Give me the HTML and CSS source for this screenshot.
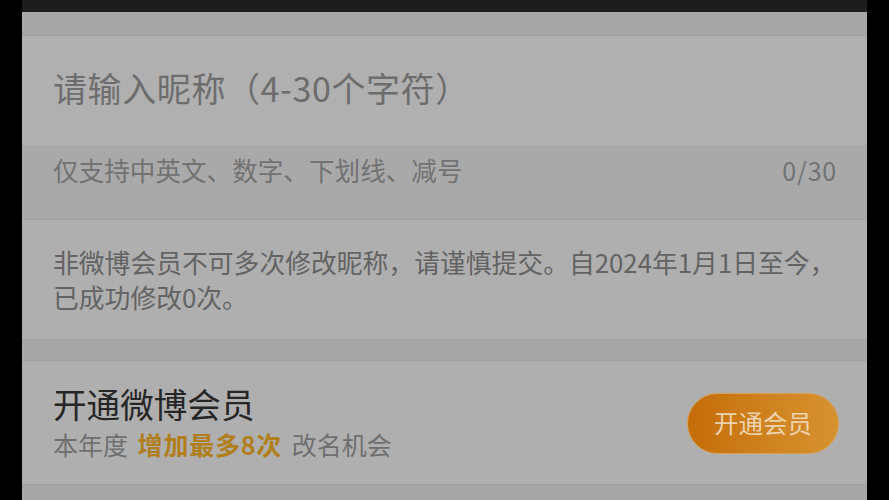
FILE: index.html
```html
<!DOCTYPE html>
<html lang="zh-CN">
<head>
<meta charset="utf-8">
<title>修改昵称</title>
<link rel="stylesheet" href="styles.css">
</head>
<body>
<div class="screen">
  <div class="topbar"></div>
  <div class="band band-top"></div>
  <div class="input-row">
    <span class="placeholder">请输入昵称（4-30个字符）</span>
  </div>
  <div class="hint-row">
    <span class="hint">仅支持中英文、数字、下划线、减号</span>
    <span class="count">0/30</span>
  </div>
  <div class="notice">
    <p>非微博会员不可多次修改昵称，请谨慎提交。自2024年1月1日至今，<br>已成功修改0次。</p>
  </div>
  <div class="band band-mid"></div>
  <div class="vip-card">
    <div class="vip-text">
      <div class="vip-title">开通微博会员</div>
      <div class="vip-sub">本年度 <b class="hl">增加最多8次</b> 改名机会</div>
    </div>
    <button class="vip-btn">开通会员</button>
  </div>
  <div class="band band-bottom"></div>
</div>
</body>
</html>
```

FILE: styles.css
```css
html, body {
  margin: 0;
  padding: 0;
  background: #000;
  height: 100%;
}
body {
  font-family: "Noto Sans CJK SC", "Noto Sans", sans-serif;
}
.screen {
  margin: 0 22px;
  height: 500px;
  background: #a6a6a6;
  display: flex;
  flex-direction: column;
  overflow: hidden;
}
.topbar {
  height: 12px;
  background: #1d1d1d;
  flex: none;
}
.band {
  background: #a7a7a7;
  flex: none;
}
.band-top {
  height: 23px;
  border-bottom: 1px solid #a1a1a1;
}
.input-row {
  height: 109px;
  background: #b0b0b0;
  display: flex;
  align-items: center;
  padding: 0 31px 6px;
  box-sizing: border-box;
  flex: none;
}
.placeholder {
  font-size: 34px;
  color: #6d6d6d;
  line-height: 40px;
  letter-spacing: 0.6px;
}
.hint-row {
  background: #a9a9a9;
  border-bottom: 1px solid #a2a2a2;
  display: flex;
  justify-content: space-between;
  align-items: flex-start;
  padding: 8px 30px 0 31px;
  box-sizing: border-box;
  height: 75px;
  flex: none;
}
.hint {
  font-size: 25.6px;
  line-height: 34px;
  color: #727272;
}
.count {
  font-size: 25px;
  line-height: 34px;
  color: #727272;
  letter-spacing: 0.8px;
}
.notice {
  height: 120px;
  background: #afafaf;
  border-bottom: 1px solid #a0a0a0;
  padding: 24px 20px 0 31px;
  box-sizing: border-box;
  flex: none;
}
.notice p {
  margin: 0;
  font-size: 25.8px;
  line-height: 35px;
  color: #636363;
  white-space: nowrap;
}
.band-mid {
  height: 20px;
  border-bottom: 1px solid #a1a1a1;
}
.vip-card {
  height: 123px;
  background: #afafaf;
  border-bottom: 1px solid #a1a1a1;
  display: flex;
  align-items: center;
  justify-content: space-between;
  padding: 0 28px 0 31px;
  flex: none;
}
.vip-title {
  font-size: 33.6px;
  line-height: 40px;
  color: #262626;
}
.vip-sub {
  margin-top: 3px;
  font-size: 25px;
  line-height: 34px;
  color: #6f6f6f;
  word-spacing: 4px;
}
.hl {
  color: #b07f1c;
  font-weight: 700;
  letter-spacing: 0.8px;
}
.vip-btn {
  width: 152px;
  height: 61px;
  border-radius: 31px;
  border: 1px solid #d7a052;
  background: linear-gradient(90deg, #c46d09 0%, #cf8320 55%, #d6922f 100%);
  color: #eed2ac;
  font-family: "Noto Sans CJK SC", sans-serif;
  font-size: 24.5px;
  padding: 0 0 2px;
  margin-top: 1px;
}
.band-bottom {
  flex: 1;
}
```
